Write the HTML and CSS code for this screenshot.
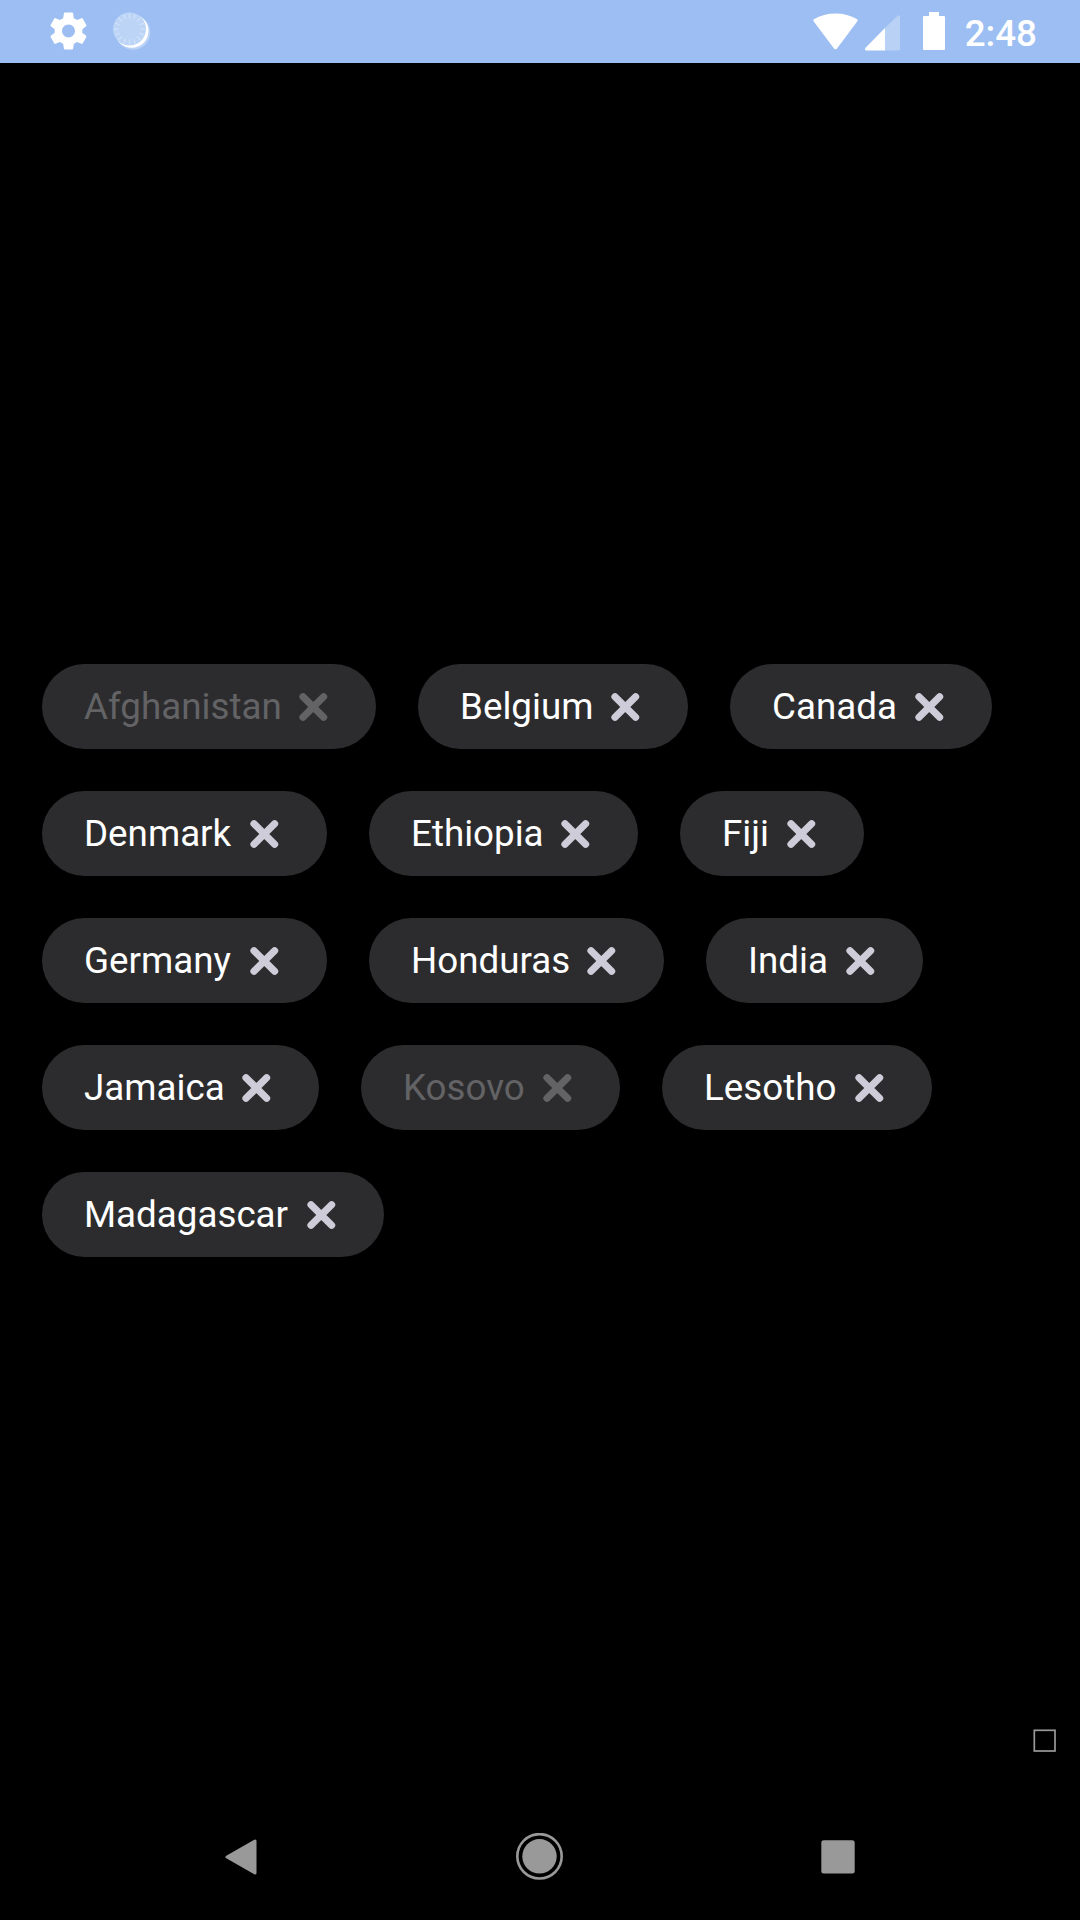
FILE: index.html
```html
<!DOCTYPE html>
<html lang="en">
<head>
<meta charset="utf-8">
<title>Countries</title>
<link rel="stylesheet" href="styles.css">
</head>
<body>
<svg class="defs" aria-hidden="true">
  <symbol id="close" viewBox="0 0 42 42"><path d="M11 10.7 31.6 31.3M31.6 10.7 11 31.3"/></symbol>
</svg>
<header class="status">
  <div class="status-left">
    <svg class="gear" viewBox="2 2 20 20"><path d="M19.43 12.98c.04-.32.07-.64.07-.98s-.03-.66-.07-.98l2.11-1.65c.19-.15.24-.42.12-.64l-2-3.46c-.12-.22-.39-.3-.61-.22l-2.49 1c-.52-.4-1.08-.73-1.69-.98l-.38-2.65C14.46 2.18 14.25 2 14 2h-4c-.25 0-.46.18-.49.42l-.38 2.65c-.61.25-1.17.59-1.69.98l-2.49-1c-.23-.09-.49 0-.61.22l-2 3.46c-.13.22-.07.49.12.64l2.11 1.65c-.04.32-.07.65-.07.98s.03.66.07.98l-2.11 1.65c-.19.15-.24.42-.12.64l2 3.46c.12.22.39.3.61.22l2.49-1c.52.4 1.08.73 1.69.98l.38 2.65c.03.24.24.42.49.42h4c.25 0 .46-.18.49-.42l.38-2.65c.61-.25 1.17-.59 1.69-.98l2.49 1c.23.09.49 0 .61-.22l2-3.46c.12-.22.07-.49-.12-.64l-2.11-1.65zM12 15.500c-1.930 0-3.500-1.570-3.500-3.500s1.570-3.500 3.500-3.500 3.500 1.570 3.500 3.500-1.570 3.500-3.500 3.500z"/></svg>
    <svg class="dial" viewBox="0 0 38 38">
      <circle class="dial-halo" cx="20" cy="20.500" r="17.300"/>
      <circle class="dial-shine" cx="18.700" cy="19" r="16.800"/>
      <circle class="dial-face" cx="16.500" cy="17" r="16.500"/>
      <circle class="dial-ticks" cx="16.500" cy="17" r="13" pathLength="160"/>
    </svg>
  </div>
  <div class="status-right">
    <svg class="wifi" viewBox="0 0 45 37"><path d="M.8 8.500Q-.2 7 .8 6.200Q10.500.4 22.500.4T44.200 6.200Q45.200 7 44.200 8.500L24 35.500Q22.500 37.200 21 35.500Z"/></svg>
    <svg class="signal" viewBox="0 0 35 36"><path class="faint" d="M20 13 32.500.8Q35-.5 35 2V34Q35 35.500 33.500 35.500H20Z"/><path d="M20 13V35.500H1.500Q-.5 35.500.3 33Z"/></svg>
    <svg class="battery" viewBox="0 0 22 38"><path d="M6 0H16V4H21Q22 4 22 5V37Q22 38 21 38H1Q0 38 0 37V5Q0 4 1 4H6Z"/></svg>
    <span class="clock">2:48</span>
  </div>
</header>
<main class="screen">
  <div class="row">
    <div class="chip disabled" style="width:334px">Afghanistan<svg><use href="#close"/></svg></div>
    <div class="chip" style="width:270px">Belgium<svg><use href="#close"/></svg></div>
    <div class="chip" style="width:262px">Canada<svg><use href="#close"/></svg></div>
  </div>
  <div class="row">
    <div class="chip" style="width:285px">Denmark<svg><use href="#close"/></svg></div>
    <div class="chip" style="width:269px">Ethiopia<svg><use href="#close"/></svg></div>
    <div class="chip" style="width:184px">Fiji<svg><use href="#close"/></svg></div>
  </div>
  <div class="row">
    <div class="chip" style="width:285px">Germany<svg><use href="#close"/></svg></div>
    <div class="chip" style="width:295px">Honduras<svg><use href="#close"/></svg></div>
    <div class="chip" style="width:217px">India<svg><use href="#close"/></svg></div>
  </div>
  <div class="row">
    <div class="chip" style="width:277px">Jamaica<svg><use href="#close"/></svg></div>
    <div class="chip disabled" style="width:259px">Kosovo<svg><use href="#close"/></svg></div>
    <div class="chip" style="width:270px">Lesotho<svg><use href="#close"/></svg></div>
  </div>
  <div class="row">
    <div class="chip" style="width:342px">Madagascar<svg><use href="#close"/></svg></div>
  </div>
</main>
<div class="tools"><svg class="box" viewBox="0 0 24 24"><rect x="2.300" y="2.300" width="20.700" height="20.700"/></svg></div>
<nav class="nav">
  <svg viewBox="0 0 48 48"><path class="back" d="M10 24 38 8V40Z"/></svg>
  <svg viewBox="0 0 48 48"><circle cx="23.500" cy="23.300" r="17.200"/><circle class="ring" cx="23.500" cy="23.300" r="22.200"/></svg>
  <svg viewBox="0 0 48 48"><rect x="7.300" y="7.200" width="33.400" height="33.400" rx="2.500"/></svg>
</nav>
</body>
</html>
```

FILE: styles.css
```css
* { box-sizing: border-box; }
body {
  margin: 0;
  width: 1080px;
  height: 1920px;
  display: flex;
  flex-direction: column;
  background: #000;
  color: #fff;
  font-family: Roboto, sans-serif;
  overflow: hidden;
}
svg { display: block; flex: none; fill: currentColor; }
.defs { display: none; }

.status {
  height: 63px;
  flex: none;
  display: flex;
  justify-content: space-between;
  padding: 0 43px 0 50px;
  background: #9cbef2;
}
.status-left, .status-right { display: flex; align-items: flex-start; }
.gear { width: 37px; height: 38px; margin-top: 12px; }
.dial { width: 38px; height: 38px; margin: 12px 0 0 26px; }
.dial-halo { opacity: .3; }
.dial-face { fill: #bcd4f6; }
.dial-ticks {
  fill: none;
  stroke: #d0e1f9;
  stroke-width: 5;
  stroke-dasharray: 2.500 7.500;
  stroke-dashoffset: 1.250;
}
.wifi { width: 45px; height: 37px; margin-top: 12.500px; }
.signal { width: 35px; height: 36px; margin: 14.500px 0 0 7px; }
.faint { opacity: .3; }
.battery { width: 22px; height: 38px; margin: 12px 0 0 23px; }
.clock {
  margin: 12px 0 0 20px;
  font-size: 36.750px;
  line-height: 44px;
  font-weight: 500;
}

.screen {
  flex: 1;
  display: flex;
  flex-direction: column;
  gap: 42px;
  padding: 601px 42px 0;
}
.row { display: flex; gap: 42px; }
.chip {
  height: 85px;
  display: flex;
  align-items: center;
  justify-content: space-between;
  padding: 0 42px;
  border-radius: 42.500px;
  background: #2c2c2e;
  font-size: 36.750px;
  line-height: 43px;
}
.chip svg {
  width: 42px;
  height: 42px;
  fill: none;
  stroke: #cdccd8;
  stroke-width: 7.200;
  stroke-linecap: round;
}
.chip.disabled { color: #636366; }
.chip.disabled svg { stroke: #636366; }

.tools {
  height: 66px;
  flex: none;
  display: flex;
  justify-content: flex-end;
  padding-right: 24px;
}
.box {
  width: 24px;
  height: 24px;
  fill: none;
  stroke: #999;
  stroke-width: 1.700;
}

.nav {
  height: 126px;
  flex: none;
  display: flex;
  justify-content: space-between;
  align-items: center;
  padding: 0 218px 0 217px;
  color: #999;
}
.nav svg { width: 48px; height: 48px; }
.back { stroke: currentColor; stroke-width: 3; stroke-linejoin: round; }
.ring { fill: none; stroke: currentColor; stroke-width: 2.600; }
```
